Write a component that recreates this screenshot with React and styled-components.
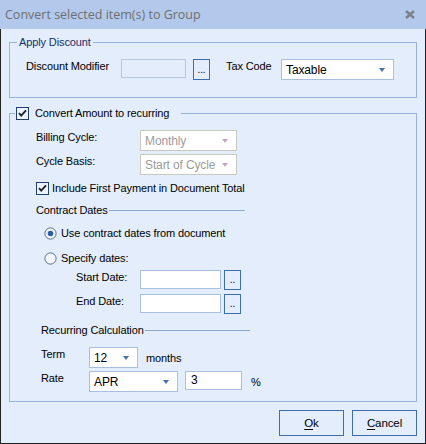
import React from 'react';
import styled, { createGlobalStyle } from 'styled-components';

const GlobalStyle = createGlobalStyle`
  html, body { margin: 0; padding: 0; background: #ffffff; }
  body {
    font-family: "Liberation Sans", Arial, sans-serif;
    font-size: 11px;
    letter-spacing: -0.12px;
    color: #000;
  }
`;

const Window = styled.div`
  width: 426px;
  height: 444px;
  box-sizing: border-box;
  border: 1px solid #222;
  border-top: none;
  background: #e3edfc;
  display: flex;
  flex-direction: column;
`;

const TitleBar = styled.div`
  height: 29px;
  flex: 0 0 29px;
  background: #b2c9ec;
  display: flex;
  align-items: center;
  justify-content: space-between;
  padding: 0 11px 0 5px;
  margin: 0 -1px;
`;

const Title = styled.span`
  font-family: "Open Sans", "Liberation Sans", sans-serif;
  font-size: 12.5px;
  letter-spacing: 0;
  color: #6e6e6e;
`;

const Body = styled.div`
  flex: 1;
  padding: 6px 8px 0 8px;
  display: flex;
  flex-direction: column;
`;

const Group = styled.fieldset`
  margin: ${(p) => p.$mt || 0}px 0 0 0;
  padding: 10px 0 ${(p) => p.$pb || 0}px 0;
  border: 1px solid #9ab3db;
  min-width: 0;
`;

const Legend = styled.legend`
  display: flex;
  align-items: center;
  gap: 6px;
  line-height: 14px;
  height: 14px;
  margin-left: ${(p) => p.$ml || 7}px;
  padding: 0 ${(p) => p.$pr || 2}px 0 ${(p) => p.$plft || 2}px;
  color: ${(p) => p.$color || '#000'};
`;

const Row = styled.div`
  display: flex;
  align-items: ${(p) => p.$align || 'flex-start'};
  margin-top: ${(p) => p.$mt || 0}px;
  padding-left: ${(p) => p.$indent || 0}px;
  height: ${(p) => p.$h || 21}px;
`;

const Label = styled.span`
  line-height: 14px;
  width: ${(p) => (p.$w ? `${p.$w}px` : 'auto')};
  margin-left: ${(p) => p.$ml || 0}px;
  flex: 0 0 auto;
  white-space: nowrap;
`;

const Unit = styled.span`
  align-self: center;
  line-height: 14px;
  margin-left: ${(p) => p.$ml || 8}px;
`;

const TextBox = styled.div`
  box-sizing: border-box;
  width: ${(p) => p.$w}px;
  height: ${(p) => p.$h || 19}px;
  border: 1px solid ${(p) => (p.$disabled ? '#b6c6df' : '#a9bfdf')};
  background: ${(p) => (p.$disabled ? '#e3edfc' : '#fff')};
  margin-left: ${(p) => p.$ml || 0}px;
  padding: 0 5px;
  line-height: 17px;
  font-size: 12px;
`;

const SelectBox = styled.div`
  box-sizing: border-box;
  width: ${(p) => p.$w}px;
  height: 21px;
  border: 1px solid ${(p) => (p.$disabled ? '#c8c9bd' : '#a9bfdf')};
  background: #fff;
  display: flex;
  align-items: center;
  justify-content: space-between;
  padding: 0 8px 0 4px;
  font-size: 12px;
  color: ${(p) => (p.$disabled ? '#9c9c9c' : '#000')};
  margin-left: ${(p) => p.$ml || 0}px;
`;

const DotButton = styled.div`
  box-sizing: border-box;
  width: 17px;
  height: ${(p) => p.$h || 21}px;
  border: 1px solid #3d6ea8;
  background: #e3edfc;
  margin-left: ${(p) => p.$ml || 0}px;
  display: flex;
  align-items: flex-end;
  justify-content: center;
  line-height: 14px;
  padding-bottom: 2px;
  font-size: 10px;
`;

const SectionHead = styled.div`
  display: flex;
  align-items: center;
  width: 209px;
  height: 14px;
  line-height: 14px;
  margin-top: ${(p) => p.$mt || 0}px;
  margin-left: ${(p) => p.$indent || 0}px;
  &::after {
    content: '';
    flex: 1;
    height: 1px;
    background: #8ea7cc;
    margin-left: 1px;
  }
`;

const Footer = styled.div`
  display: flex;
  justify-content: flex-end;
  gap: 8px;
  margin-top: 8px;
`;

const DialogButton = styled.button`
  box-sizing: border-box;
  width: 65px;
  height: 26px;
  border: 1px solid #3d6ea8;
  background: #e3edfc;
  font-family: "Liberation Sans", Arial, sans-serif;
  font-size: 11.5px;
  letter-spacing: -0.1px;
  color: #000;
  padding: 0;
  u { text-decoration: underline; text-underline-offset: 2px; }
`;

const Arrow = ({ disabled }) => (
  <svg width="6" height="4" viewBox="0 0 6 4">
    <path d="M0 0 H6 L3 4 Z" fill={disabled ? '#c4a9c9' : '#4a6fae'} />
  </svg>
);

const Check = () => (
  <svg width="13" height="13" viewBox="0 0 13 13">
    <rect x="0.5" y="0.5" width="12" height="12" fill="#eef3fb" stroke="#1c3f6e" />
    <path d="M3 6.2 L5.2 8.6 L10 3.4" fill="none" stroke="#1a2234" strokeWidth="1.9" />
  </svg>
);

const Radio = ({ checked }) => (
  <svg width="13" height="13" viewBox="0 0 13 13">
    <circle cx="6.5" cy="6.5" r="5.6" fill="#f3f6fb" stroke="#55708f" />
    {checked && <circle cx="6.5" cy="6.5" r="2.8" fill="#2e5f9e" />}
  </svg>
);

const Choice = styled.label`
  display: flex;
  align-items: center;
  gap: ${(p) => p.$gap || 4}px;
  line-height: 14px;
  height: 14px;
  margin-top: ${(p) => p.$mt || 0}px;
  margin-left: ${(p) => p.$indent || 0}px;
`;

const Close = () => (
  <svg width="10" height="9" viewBox="0 0 10 9">
    <path d="M1 1 L9 8 M9 1 L1 8" stroke="#7b7f86" strokeWidth="2.4" />
  </svg>
);

export default function App() {
  return (
    <>
      <GlobalStyle />
      <Window>
        <TitleBar>
          <Title>Convert selected item(s) to Group</Title>
          <Close />
        </TitleBar>
        <Body>
          <Group $pb={17}>
            <Legend $color="#14306a">Apply Discount</Legend>
            <Row $indent={16}>
              <Label $w={95}>Discount Modifier</Label>
              <TextBox $w={65} $disabled />
              <DotButton $ml={7}>...</DotButton>
              <Label $w={55} $ml={16}>Tax Code</Label>
              <SelectBox $w={113}>
                Taxable
                <Arrow />
              </SelectBox>
            </Row>
          </Group>

          <Group $mt={8} $pb={9}>
            <Legend $ml={5} $plft={1} $pr={12}>
              <Check />
              Convert Amount to recurring
            </Legend>
            <Row $indent={26}>
              <Label $w={104}>Billing Cycle:</Label>
              <SelectBox $w={97} $disabled>
                Monthly
                <Arrow disabled />
              </SelectBox>
            </Row>
            <Row $indent={26} $mt={3}>
              <Label $w={104}>Cycle Basis:</Label>
              <SelectBox $w={97} $disabled>
                Start of Cycle
                <Arrow disabled />
              </SelectBox>
            </Row>
            <Choice $indent={26} $mt={6} $gap={3}>
              <Check />
              Include First Payment in Document Total
            </Choice>
            <SectionHead $indent={26} $mt={8}>Contract Dates</SectionHead>
            <Choice $indent={34} $mt={9}>
              <Radio checked />
              Use contract dates from document
            </Choice>
            <Choice $indent={34} $mt={11}>
              <Radio />
              Specify dates:
            </Choice>
            <Row $indent={66} $mt={5} $h={20}>
              <Label $w={64}>Start Date:</Label>
              <TextBox $w={81} />
              <DotButton $ml={3} $h={20}>..</DotButton>
            </Row>
            <Row $indent={66} $mt={4} $h={20}>
              <Label $w={64}>End Date:</Label>
              <TextBox $w={81} />
              <DotButton $ml={3} $h={20}>..</DotButton>
            </Row>
            <SectionHead $indent={31} $mt={9}>Recurring Calculation</SectionHead>
            <Row $indent={31} $mt={10}>
              <Label $w={48}>Term</Label>
              <SelectBox $w={49}>
                12
                <Arrow />
              </SelectBox>
              <Unit $ml={8}>months</Unit>
            </Row>
            <Row $indent={31} $mt={3}>
              <Label $w={48}>Rate</Label>
              <SelectBox $w={89}>
                APR
                <Arrow />
              </SelectBox>
              <TextBox $w={57} $ml={7}>3</TextBox>
              <Unit $ml={9}>%</Unit>
            </Row>
          </Group>

          <Footer>
            <DialogButton>
              <u>O</u>k
            </DialogButton>
            <DialogButton>
              <u>C</u>ancel
            </DialogButton>
          </Footer>
        </Body>
      </Window>
    </>
  );
}
